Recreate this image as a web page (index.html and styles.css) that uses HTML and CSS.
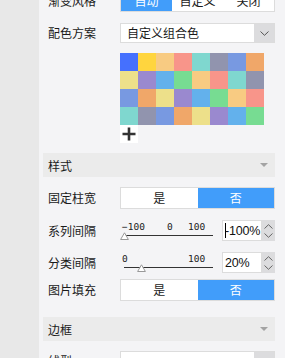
FILE: index.html
```html
<!DOCTYPE html>
<html>
<head>
<meta charset="utf-8">
<link rel="stylesheet" href="styles.css">
</head>
<body>
<div class="app">
  <div class="rail"></div>
  <div class="panel">
    <div class="row first">
      <span class="label">渐变风格</span>
      <div class="seg">
        <span class="opt on">自动</span><span class="opt">自定义</span><span class="opt">关闭</span>
      </div>
    </div>

    <div class="row gap11">
      <span class="label">配色方案</span>
      <div class="select">
        <span class="sel-text">自定义组合色</span>
        <span class="sel-btn"><svg width="9" height="5" viewBox="0 0 9 5"><path d="M0.5 0.5 L4.5 4.3 L8.5 0.5" fill="none" stroke="#555" stroke-width="1"/></svg></span>
      </div>
    </div>

    <div class="row gap10 top">
      <span class="label"></span>
      <div class="palette">
        <div class="grid">
          <i style="background:#4570fe"></i><i style="background:#ffd53e"></i><i style="background:#f8cb82"></i><i style="background:#f8958a"></i><i style="background:#7fd7cf"></i><i style="background:#9194ae"></i><i style="background:#7899e1"></i><i style="background:#f0a769"></i>
          <i style="background:#ede08a"></i><i style="background:#9a89cf"></i><i style="background:#63b1ec"></i><i style="background:#77dc92"></i><i style="background:#f8cb82"></i><i style="background:#f8958a"></i><i style="background:#7fd7cf"></i><i style="background:#9194ae"></i>
          <i style="background:#7899e1"></i><i style="background:#f0a769"></i><i style="background:#ede08a"></i><i style="background:#9a89cf"></i><i style="background:#63b1ec"></i><i style="background:#77dc92"></i><i style="background:#f8cb82"></i><i style="background:#f8958a"></i>
          <i style="background:#7fd7cf"></i><i style="background:#9194ae"></i><i style="background:#7899e1"></i><i style="background:#f0a769"></i><i style="background:#ede08a"></i><i style="background:#9a89cf"></i><i style="background:#63b1ec"></i><i style="background:#77dc92"></i>
        </div>
        <div class="add"><svg width="14" height="14" viewBox="0 0 14 14"><path d="M7 0.5 V13.5 M0.5 7 H13.5" stroke="#333" stroke-width="2.6"/></svg></div>
      </div>
    </div>

    <div class="section gap10">
      <span class="sec-title">样式</span>
      <span class="caret"></span>
    </div>

    <div class="row gap10">
      <span class="label">固定柱宽</span>
      <div class="seg two">
        <span class="opt">是</span><span class="opt on">否</span>
      </div>
    </div>

    <div class="row gap11">
      <span class="label">系列间隔</span>
      <div class="slider">
        <span class="tick" style="left:2px">−100</span>
        <span class="tick" style="left:47px">0</span>
        <span class="tick" style="left:68px">100</span>
        <span class="track"></span>
        <span class="thumb" style="left:0px"></span>
      </div>
      <div class="num">
        <span class="num-text"><span class="cursor"></span>-100%</span>
        <span class="spin">
          <svg width="9" height="5" viewBox="0 0 9 5"><path d="M0.5 4.5 L4.5 0.7 L8.5 4.5" fill="none" stroke="#666" stroke-width="1"/></svg>
          <svg width="9" height="5" viewBox="0 0 9 5"><path d="M0.5 0.5 L4.5 4.3 L8.5 0.5" fill="none" stroke="#666" stroke-width="1"/></svg>
        </span>
      </div>
    </div>

    <div class="row gap11">
      <span class="label">分类间隔</span>
      <div class="slider">
        <span class="tick" style="left:2px">0</span>
        <span class="tick" style="left:68px">100</span>
        <span class="track"></span>
        <span class="thumb" style="left:17px"></span>
      </div>
      <div class="num">
        <span class="num-text">20%</span>
        <span class="spin">
          <svg width="9" height="5" viewBox="0 0 9 5"><path d="M0.5 4.5 L4.5 0.7 L8.5 4.5" fill="none" stroke="#666" stroke-width="1"/></svg>
          <svg width="9" height="5" viewBox="0 0 9 5"><path d="M0.5 0.5 L4.5 4.3 L8.5 0.5" fill="none" stroke="#666" stroke-width="1"/></svg>
        </span>
      </div>
    </div>

    <div class="row gap6">
      <span class="label">图片填充</span>
      <div class="seg two">
        <span class="opt">是</span><span class="opt on">否</span>
      </div>
    </div>

    <div class="section gap16">
      <span class="sec-title">边框</span>
      <span class="caret"></span>
    </div>

    <div class="row gap10">
      <span class="label">线型</span>
      <div class="select">
        <span class="sel-text"></span>
        <span class="sel-btn"><svg width="9" height="5" viewBox="0 0 9 5"><path d="M0.5 0.5 L4.5 4.3 L8.5 0.5" fill="none" stroke="#555" stroke-width="1"/></svg></span>
      </div>
    </div>
  </div>
</div>
</body>
</html>
```

FILE: styles.css
```css
* { box-sizing: border-box; }
html, body { margin: 0; padding: 0; }
body {
  font-family: "Noto Sans CJK SC", "Noto Sans", sans-serif;
  font-size: 12px;
  color: #1a1a1a;
  background: #f4f4f6;
}
.app {
  display: flex;
  width: 285px;
  height: 358px;
  overflow: hidden;
}
.rail {
  width: 39px;
  flex: none;
  background: #e8e8e8;
}
.panel {
  flex: 1;
  background: #f4f4f6;
  padding: 0 10px 0 4px;
}
.row {
  display: flex;
  align-items: center;
  padding-left: 5px;
}
.row.top { align-items: flex-start; }
.first { margin-top: -10px; }
.gap6 { margin-top: 6px; }
.gap10 { margin-top: 10px; }
.gap11 { margin-top: 11px; }
.gap16 { margin-top: 16px; }
.label {
  width: 72px;
  flex: none;
  line-height: 16px;
  white-space: nowrap;
}
.seg {
  display: flex;
  width: 155px;
  height: 22px;
  border: 1px solid #dcdcdc;
  background: #fff;
}
.opt {
  flex: 1;
  display: flex;
  align-items: center;
  justify-content: center;
  font-size: 12px;
  line-height: 1;
}
.opt.on {
  background: #419dfa;
  color: #fff;
}
.select {
  display: flex;
  width: 155px;
  height: 20px;
  border: 1px solid #dcdcdc;
  background: #fff;
}
.sel-text {
  flex: 1;
  padding-left: 6px;
  line-height: 18px;
}
.sel-btn {
  width: 20px;
  flex: none;
  background: #dcdcde;
  display: flex;
  align-items: center;
  justify-content: center;
}
.palette {
  display: flex;
  flex-direction: column;
}
.grid {
  display: grid;
  grid-template-columns: repeat(8, 18px);
  grid-auto-rows: 18px;
}
.grid i { display: block; }
.add {
  width: 18px;
  height: 18px;
  background: #fff;
  display: flex;
  align-items: center;
  justify-content: center;
}
.section {
  display: flex;
  align-items: center;
  justify-content: space-between;
  height: 24px;
  background: #ebebeb;
  padding: 0 7px 0 5px;
}
.caret {
  width: 0;
  height: 0;
  border-left: 4px solid transparent;
  border-right: 4px solid transparent;
  border-top: 4px solid #a3a3a3;
}
.slider {
  position: relative;
  width: 95px;
  height: 20px;
  flex: none;
}
.tick {
  position: absolute;
  top: 0;
  font-family: "DejaVu Sans Mono", monospace;
  font-size: 9.5px;
  line-height: 11px;
  color: #222;
}
.track {
  position: absolute;
  left: 4px;
  right: 2px;
  top: 14px;
  height: 1px;
  background: #333;
}
.thumb {
  position: absolute;
  top: 11px;
  width: 9px;
  height: 8px;
  background: url("data:image/svg+xml;utf8,<svg xmlns='http://www.w3.org/2000/svg' width='9' height='8'><path d='M4.5 0.8 L8.4 7.5 L0.6 7.5 Z' fill='white' stroke='%23999' stroke-width='1'/></svg>") no-repeat;
}
.num {
  display: flex;
  margin-left: 7px;
  width: 53px;
  height: 21px;
}
.num-text {
  width: 40px;
  flex: none;
  background: #fff;
  border: 1px solid #dcdcdc;
  padding-left: 2px;
  display: flex;
  align-items: center;
  font-family: "Liberation Sans", "Noto Sans", sans-serif;
  font-size: 12.5px;
  letter-spacing: -0.2px;
  color: #111;
}
.cursor {
  display: inline-block;
  width: 1px;
  height: 15px;
  background: #000;
  margin-right: -1px;
}
.spin {
  flex: 1;
  background: #dcdcde;
  display: flex;
  flex-direction: column;
  align-items: center;
  justify-content: center;
  gap: 4px;
}
```
